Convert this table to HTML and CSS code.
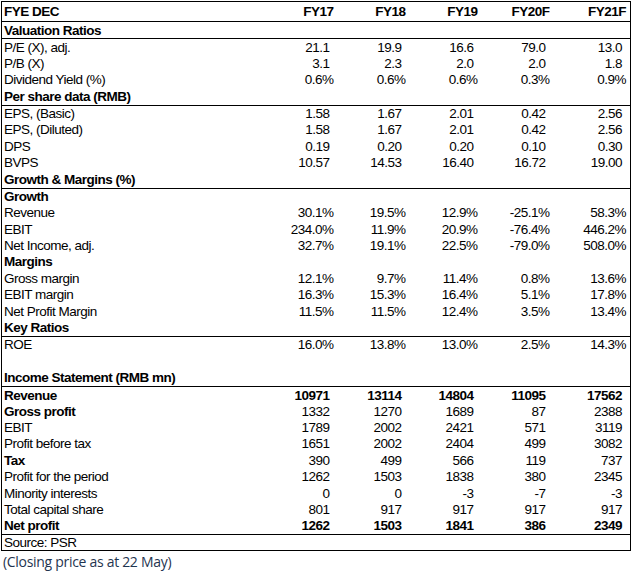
FILE: index.html
```html
<!DOCTYPE html>
<html>
<head>
<meta charset="utf-8">
<link rel="stylesheet" href="styles.css">
</head>
<body>
<table class="fin">
  <colgroup>
    <col class="c-label"><col class="c-a"><col class="c-b"><col class="c-c"><col class="c-d"><col class="c-e">
  </colgroup>
  <tr class="hdr"><th>FYE DEC</th><th>FY17</th><th>FY18</th><th>FY19</th><th>FY20F</th><th>FY21F</th></tr>
  <tr class="sec"><td colspan="6">Valuation Ratios</td></tr>
  <tr><td>P/E (X), adj.</td><td class="n">21.1</td><td class="n">19.9</td><td class="n">16.6</td><td class="n">79.0</td><td class="n">13.0</td></tr>
  <tr><td>P/B (X)</td><td class="n">3.1</td><td class="n">2.3</td><td class="n">2.0</td><td class="n">2.0</td><td class="n">1.8</td></tr>
  <tr><td>Dividend Yield (%)</td><td>0.6%</td><td>0.6%</td><td>0.6%</td><td>0.3%</td><td>0.9%</td></tr>
  <tr class="sec"><td colspan="6">Per share data (RMB)</td></tr>
  <tr><td>EPS, (Basic)</td><td class="n">1.58</td><td class="n">1.67</td><td class="n">2.01</td><td class="n">0.42</td><td class="n">2.56</td></tr>
  <tr><td>EPS, (Diluted)</td><td class="n">1.58</td><td class="n">1.67</td><td class="n">2.01</td><td class="n">0.42</td><td class="n">2.56</td></tr>
  <tr><td>DPS</td><td class="n">0.19</td><td class="n">0.20</td><td class="n">0.20</td><td class="n">0.10</td><td class="n">0.30</td></tr>
  <tr><td>BVPS</td><td class="n">10.57</td><td class="n">14.53</td><td class="n">16.40</td><td class="n">16.72</td><td class="n">19.00</td></tr>
  <tr class="sec"><td colspan="6">Growth &amp; Margins (%)</td></tr>
  <tr class="sub"><td colspan="6">Growth</td></tr>
  <tr><td>Revenue</td><td>30.1%</td><td>19.5%</td><td>12.9%</td><td>-25.1%</td><td>58.3%</td></tr>
  <tr><td>EBIT</td><td>234.0%</td><td>11.9%</td><td>20.9%</td><td>-76.4%</td><td>446.2%</td></tr>
  <tr><td>Net Income, adj.</td><td>32.7%</td><td>19.1%</td><td>22.5%</td><td>-79.0%</td><td>508.0%</td></tr>
  <tr class="sub"><td colspan="6">Margins</td></tr>
  <tr><td>Gross margin</td><td>12.1%</td><td>9.7%</td><td>11.4%</td><td>0.8%</td><td>13.6%</td></tr>
  <tr><td>EBIT margin</td><td>16.3%</td><td>15.3%</td><td>16.4%</td><td>5.1%</td><td>17.8%</td></tr>
  <tr><td>Net Profit Margin</td><td>11.5%</td><td>11.5%</td><td>12.4%</td><td>3.5%</td><td>13.4%</td></tr>
  <tr class="sec"><td colspan="6">Key Ratios</td></tr>
  <tr><td>ROE</td><td>16.0%</td><td>13.8%</td><td>13.0%</td><td>2.5%</td><td>14.3%</td></tr>
  <tr class="blank"><td colspan="6">&nbsp;</td></tr>
  <tr class="sec"><td colspan="6">Income Statement (RMB mn)</td></tr>
  <tr class="bold"><td>Revenue</td><td class="n">10971</td><td class="n">13114</td><td class="n">14804</td><td class="n">11095</td><td class="n">17562</td></tr>
  <tr><td class="b">Gross profit</td><td class="n">1332</td><td class="n">1270</td><td class="n">1689</td><td class="n">87</td><td class="n">2388</td></tr>
  <tr><td>EBIT</td><td class="n">1789</td><td class="n">2002</td><td class="n">2421</td><td class="n">571</td><td class="n">3119</td></tr>
  <tr><td>Profit before tax</td><td class="n">1651</td><td class="n">2002</td><td class="n">2404</td><td class="n">499</td><td class="n">3082</td></tr>
  <tr><td class="b">Tax</td><td class="n">390</td><td class="n">499</td><td class="n">566</td><td class="n">119</td><td class="n">737</td></tr>
  <tr><td>Profit for the period</td><td class="n">1262</td><td class="n">1503</td><td class="n">1838</td><td class="n">380</td><td class="n">2345</td></tr>
  <tr><td>Minority interests</td><td class="n">0</td><td class="n">0</td><td class="n">-3</td><td class="n">-7</td><td class="n">-3</td></tr>
  <tr><td>Total capital share</td><td class="n">801</td><td class="n">917</td><td class="n">917</td><td class="n">917</td><td class="n">917</td></tr>
  <tr class="bold last"><td>Net profit</td><td class="n">1262</td><td class="n">1503</td><td class="n">1841</td><td class="n">386</td><td class="n">2349</td></tr>
  <tr class="src"><td colspan="6">Source: PSR</td></tr>
</table>
<p class="caption">(Closing price as at 22 May)</p>
</body>
</html>
```
FILE: styles.css
```css
html, body {
  margin: 0;
  padding: 0;
  background: #ffffff;
}
body {
  padding: 1px 0 0 1px;
}
.fin {
  border-collapse: collapse;
  table-layout: fixed;
  width: 629px;
  border: 1px solid #000;
  font-family: "Liberation Sans", Arial, sans-serif;
  font-size: 13.5px;
  letter-spacing: -0.5px;
  color: #000;
}
.c-label { width: 264px; }
.c-a { width: 72px; }
.c-b { width: 72px; }
.c-c { width: 72px; }
.c-d { width: 72px; }
.c-e { width: 77px; }
.fin th, .fin td {
  padding: 0 4px 0 2px;
  text-align: right;
  white-space: nowrap;
  line-height: 15px;
}
.fin th:first-child, .fin td:first-child {
  text-align: left;
  padding-left: 2px;
}
.fin tr { height: 16.4px; }
.fin tr.hdr { height: 20px; }
.fin th { font-weight: bold; border-bottom: 1px solid #000; }
.fin .sec td {
  font-weight: bold;
  text-align: left;
  border-bottom: 1px solid #000;
}
.fin .sec { height: 17.3px; }
.fin .sub td { font-weight: bold; text-align: left; }
.fin td.n { padding-right: 8px; }
.fin .bold td { font-weight: bold; }
.fin td.b { font-weight: bold; }
.fin .last td { border-bottom: 1px solid #000; }
.fin .src td { text-align: left; }
.fin .src { height: 16.6px; }
.caption {
  margin: 2px 0 0 2px;
  font-family: "Open Sans", "Noto Sans", sans-serif;
  font-size: 14px;
  letter-spacing: -0.3px;
  color: #1f3550;
  line-height: 18px;
}
```
